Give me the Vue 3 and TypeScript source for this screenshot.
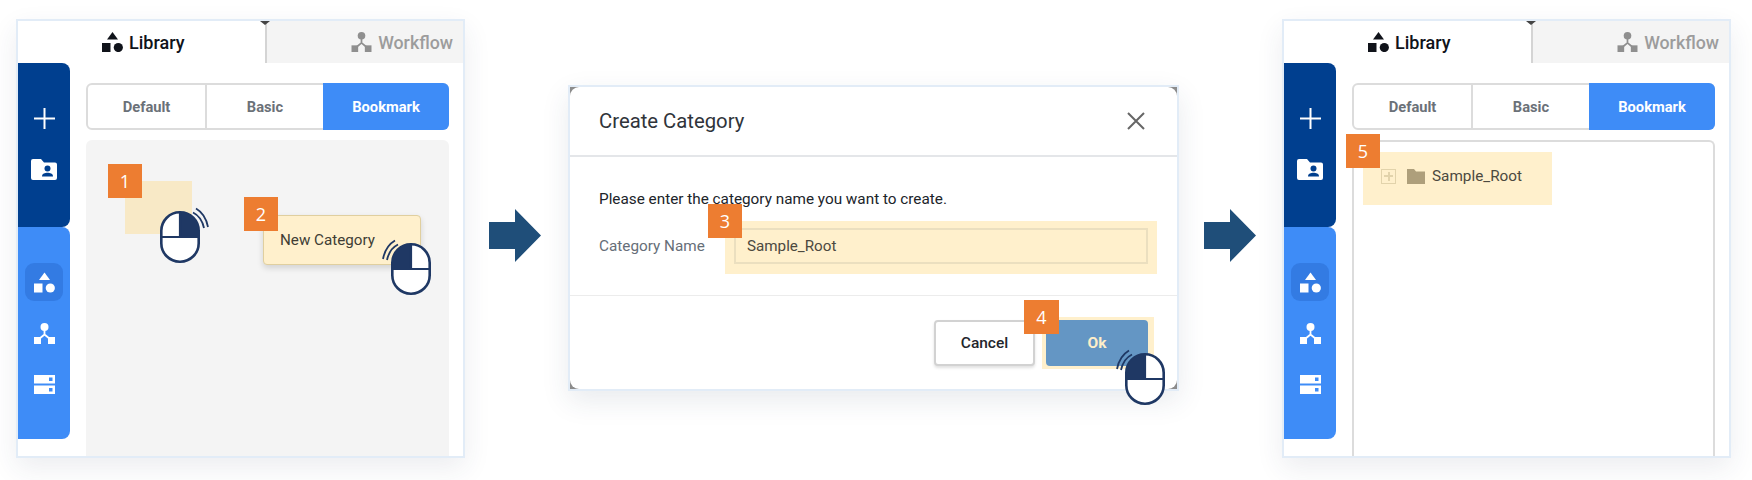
<script setup lang="ts">
const segments = ['Default', 'Basic', 'Bookmark']
</script>

<template>
  <div class="page">
    <svg class="defs" width="0" height="0">
      <symbol id="mouse" viewBox="0 0 50 56">
        <path class="wave" d="M36 1.5C42 5 46.500 12 48 20" />
        <path class="wave" d="M33 5.500C38 8 42.500 14 44 21" />
        <rect x="1.300" y="5.300" width="37.400" height="49.400" rx="18.500" fill="#fff" stroke="#1f3864" stroke-width="2.600" />
        <path d="M20 5.300A18.500 18.500 0 0 1 38.700 23.800V30H20Z" fill="#1f3864" />
        <path d="M1.300 30H38.700M20 5.300V30" stroke="#1f3864" stroke-width="2.200" fill="none" />
      </symbol>
      <symbol id="shapes" viewBox="0 0 21 20">
        <path d="M10.500 0L16 7.500H5Z" />
        <rect x="0" y="11" width="8.500" height="9" />
        <circle cx="16.300" cy="15.500" r="4.600" />
      </symbol>
      <symbol id="flow" viewBox="0 0 21 21">
        <circle cx="10.500" cy="4" r="4" />
        <rect x="0" y="14" width="7" height="7" />
        <rect x="14" y="14" width="7" height="7" />
        <path d="M10.500 7V11.500L5 16M10.500 11.500L16 16" fill="none" stroke="currentColor" stroke-width="1.800" />
      </symbol>
      <symbol id="folder-user" viewBox="0 0 26 21">
        <path d="M2 0H10L13 3.500H24A2 2 0 0 1 26 5.500V19A2 2 0 0 1 24 21H2A2 2 0 0 1 0 19V2A2 2 0 0 1 2 0Z" fill="#fff" />
        <circle cx="16.500" cy="9.500" r="3" fill="#003f8f" />
        <path d="M11 17.500C11 14.500 14 13.800 16.500 13.800S22 14.500 22 17.500Z" fill="#003f8f" />
      </symbol>
      <symbol id="servers" viewBox="0 0 21 19">
        <rect width="21" height="8.500" fill="#fff" />
        <rect y="10.500" width="21" height="8.500" fill="#fff" />
        <rect x="15" y="2.500" width="3.500" height="3.500" fill="#3e8cf7" />
        <rect x="15" y="13" width="3.500" height="3.500" fill="#3e8cf7" />
      </symbol>
    </svg>

    <!-- step 1, 2 -->
    <section class="panel">
      <div class="tabs">
        <div class="tab active"><svg class="tab-icon"><use href="#shapes" /></svg>Library</div>
        <div class="tab"><svg class="tab-icon"><use href="#flow" /></svg>Workflow</div>
        <span class="notch"></span>
      </div>
      <div class="panel-body">
        <aside class="sidebar">
          <div class="side-top">
            <svg class="plus" viewBox="0 0 21 21"><path d="M10.500 0V21M0 10.500H21" /></svg>
            <svg class="folder-user"><use href="#folder-user" /></svg>
          </div>
          <div class="side-bottom">
            <div class="side-item current"><svg class="side-icon"><use href="#shapes" /></svg></div>
            <div class="side-item"><svg class="side-icon"><use href="#flow" /></svg></div>
            <div class="side-item"><svg class="side-icon"><use href="#servers" /></svg></div>
          </div>
        </aside>
        <div class="main">
          <div class="seg">
            <div v-for="s in segments" :key="s" class="seg-item" :class="{ on: s === 'Bookmark' }">{{ s }}</div>
          </div>
          <div class="content grey"></div>
        </div>
      </div>
      <div class="drag-area"></div>
      <span class="badge b1">1</span>
      <div class="new-cat">New Category</div>
      <span class="badge b2">2</span>
      <svg class="mouse m1"><use href="#mouse" /></svg>
      <svg class="mouse m2 flip"><use href="#mouse" /></svg>
    </section>

    <svg class="arrow first" viewBox="0 0 52 53"><path d="M0 13H26V0L52 26.500L26 53V40H0Z" /></svg>

    <!-- step 3, 4 -->
    <section class="dialog">
      <div class="dialog-inner">
        <header class="dlg-head">
          <h2>Create Category</h2>
          <svg class="close" viewBox="0 0 18 18"><path d="M1 1L17 17M17 1L1 17" /></svg>
        </header>
        <div class="dlg-body">
          <p>Please enter the category name you want to create.</p>
          <div class="dlg-row">
            <label>Category Name</label>
            <div class="input-mark"><div class="input">Sample_Root</div></div>
          </div>
        </div>
        <footer class="dlg-foot">
          <button class="btn cancel">Cancel</button>
          <div class="ok-mark"><button class="btn ok">Ok</button></div>
        </footer>
      </div>
      <span class="badge b3">3</span>
      <span class="badge b4">4</span>
      <svg class="mouse m3 flip"><use href="#mouse" /></svg>
    </section>

    <svg class="arrow last" viewBox="0 0 52 53"><path d="M0 13H26V0L52 26.500L26 53V40H0Z" /></svg>

    <!-- step 5 -->
    <section class="panel">
      <div class="tabs">
        <div class="tab active"><svg class="tab-icon"><use href="#shapes" /></svg>Library</div>
        <div class="tab"><svg class="tab-icon"><use href="#flow" /></svg>Workflow</div>
        <span class="notch"></span>
      </div>
      <div class="panel-body">
        <aside class="sidebar">
          <div class="side-top">
            <svg class="plus" viewBox="0 0 21 21"><path d="M10.500 0V21M0 10.500H21" /></svg>
            <svg class="folder-user"><use href="#folder-user" /></svg>
          </div>
          <div class="side-bottom">
            <div class="side-item current"><svg class="side-icon"><use href="#shapes" /></svg></div>
            <div class="side-item"><svg class="side-icon"><use href="#flow" /></svg></div>
            <div class="side-item"><svg class="side-icon"><use href="#servers" /></svg></div>
          </div>
        </aside>
        <div class="main">
          <div class="seg">
            <div v-for="s in segments" :key="s" class="seg-item" :class="{ on: s === 'Bookmark' }">{{ s }}</div>
          </div>
          <div class="content tree">
            <div class="tree-row">
              <span class="expander"></span>
              <svg class="folder" viewBox="0 0 18 15"><path d="M0 0H7L9 2.500H18V15H0Z" /></svg>
              <span>Sample_Root</span>
            </div>
          </div>
        </div>
      </div>
      <span class="badge b5">5</span>
    </section>
  </div>
</template>

<style scoped>
.page {
  width: 1752px;
  height: 480px;
  box-sizing: border-box;
  padding: 19px 0 0 16px;
  display: flex;
  align-items: flex-start;
  overflow: hidden;
  background: #fff;
  font-family: Roboto, "Liberation Sans", sans-serif;
}
.defs {
  position: absolute;
}
.wave {
  fill: none;
  stroke: #1f3864;
  stroke-width: 1.800;
}

.panel {
  position: relative;
  flex: none;
  width: 449px;
  height: 439px;
  box-sizing: border-box;
  border: 2px solid #e2ecf7;
  display: flex;
  flex-direction: column;
  background: #fff;
  box-shadow: 0 10px 26px rgba(40, 60, 90, 0.09);
}
.tabs {
  position: relative;
  display: flex;
  height: 42px;
  flex: none;
}
.tab {
  display: flex;
  align-items: center;
  font-size: 18px;
  font-weight: 500;
}
.tab.active {
  width: 249px;
  box-sizing: border-box;
  padding-left: 84px;
  color: #10131a;
  border-right: 2px solid #d4d4d4;
}
.tab:not(.active) {
  flex: 1;
  justify-content: flex-end;
  padding-right: 10px;
  font-size: 17.800px;
  color: #9c9c9c;
  background: #f4f4f4;
}
.tab-icon {
  width: 21px;
  height: 20px;
  margin-right: 6px;
  fill: currentColor;
}
.tab:not(.active) .tab-icon {
  fill: #8f8f8f;
  color: #8f8f8f;
  margin-right: 6px;
}
.notch {
  position: absolute;
  left: 242px;
  top: 0;
  width: 0;
  height: 0;
  border: 5px solid transparent;
  border-top: 4px solid #444;
  border-bottom-width: 0;
}

.panel-body {
  flex: 1;
  display: flex;
  min-height: 0;
}
.sidebar {
  flex: none;
  width: 52px;
  margin-bottom: 17px;
  display: flex;
  flex-direction: column;
}
.side-top {
  height: 164px;
  box-sizing: border-box;
  padding-top: 45px;
  display: flex;
  flex-direction: column;
  align-items: center;
  gap: 30px;
  background: #003f8f;
  border-radius: 0 8px 8px 0;
}
.side-bottom {
  flex: 1;
  padding-top: 36px;
  display: flex;
  flex-direction: column;
  align-items: center;
  gap: 13px;
  background: #3e8cf7;
  border-radius: 0 8px 8px 0;
}
.plus {
  width: 21px;
  height: 21px;
  stroke: #fff;
  stroke-width: 2;
}
.folder-user {
  width: 26px;
  height: 21px;
}
.side-item {
  width: 38px;
  height: 38px;
  display: flex;
  align-items: center;
  justify-content: center;
  color: #fff;
  border-radius: 9px;
}
.side-item.current {
  background: #337be3;
}
.side-icon {
  width: 21px;
  height: 21px;
  fill: #fff;
}

.main {
  flex: 1;
  padding: 20px 14px 0 16px;
  display: flex;
  flex-direction: column;
  gap: 10px;
  min-width: 0;
}
.seg {
  display: flex;
  height: 47px;
  flex: none;
  box-sizing: border-box;
  border: 2px solid #dcdcdc;
  border-radius: 6px;
  overflow: visible;
}
.seg-item {
  flex: 1;
  display: flex;
  align-items: center;
  justify-content: center;
  font-size: 14.700px;
  font-weight: 700;
  color: #6b7178;
}
.seg-item:first-child {
  flex: none;
  width: 119px;
  box-sizing: border-box;
  border-right: 2px solid #dcdcdc;
}
.seg-item.on {
  flex: none;
  width: 126px;
  margin: -2px -2px -2px 0;
  color: #fff;
  background: #3e8cf7;
  border-radius: 0 6px 6px 0;
}
.content {
  flex: 1;
  border-radius: 6px 6px 0 0;
  box-sizing: border-box;
}
.content.grey {
  background: #f4f4f4;
}
.content.tree {
  border: 2px solid #dcdcdc;
  border-bottom: 0;
  padding: 10px 0 0 9px;
}
.tree-row {
  width: 189px;
  height: 53px;
  box-sizing: border-box;
  padding-left: 18px;
  padding-bottom: 5px;
  display: flex;
  align-items: center;
  background: #fff0cc;
  font-size: 15.300px;
  color: #4c493f;
}
.expander {
  position: relative;
  width: 15px;
  height: 15px;
  box-sizing: border-box;
  margin-right: 11px;
  border: 1px solid #e2d3ab;
  background:
    linear-gradient(#e2d3ab, #e2d3ab) center / 9px 2px no-repeat,
    linear-gradient(#e2d3ab, #e2d3ab) center / 2px 9px no-repeat;
}
.folder {
  width: 18px;
  height: 15px;
  margin-right: 7px;
  fill: #ae9f7b;
}

.drag-area {
  position: absolute;
  left: 107px;
  top: 160px;
  width: 67px;
  height: 53px;
  background: #f8e9c6;
}
.new-cat {
  position: absolute;
  left: 245px;
  top: 194px;
  width: 158px;
  height: 50px;
  box-sizing: border-box;
  padding: 0 0 0 16px;
  display: flex;
  align-items: center;
  font-size: 15.200px;
  color: #403d35;
  background: #fff0cc;
  border: 1px solid #e0cf9f;
  border-radius: 4px;
  box-shadow: 0 3px 6px rgba(0, 0, 0, 0.14);
}
.badge {
  position: absolute;
  width: 34px;
  height: 34px;
  display: flex;
  align-items: center;
  justify-content: center;
  background: #ed7d31;
  color: #fff;
  font-family: "Open Sans", sans-serif;
  font-size: 18px;
}
.b1 { left: 90px; top: 143px; }
.b2 { left: 226px; top: 176px; }
.b3 { left: 138px; top: 117px; }
.b4 { left: 454px; top: 213px; width: 35px; }
.b5 { left: 62px; top: 113px; }

.mouse {
  position: absolute;
  width: 50px;
  height: 56px;
}
.flip {
  transform: scaleX(-1);
}
.m1 { left: 142px; top: 186px; }
.m2 { left: 363px; top: 218px; }
.m3 { left: 545px; top: 262px; }

.arrow {
  flex: none;
  width: 52px;
  height: 53px;
  margin: 190px 25px 0;
  fill: #1f4e79;
}
.arrow.first {
  margin-left: 24px;
  margin-right: 27px;
}
.arrow.last {
  margin-right: 26px;
}

.dialog {
  position: relative;
  flex: none;
  width: 611px;
  height: 306px;
  margin-top: 66px;
  box-sizing: border-box;
  border: 2px solid #e2ecf7;
  background: #8c8c8c;
  box-shadow: 0 10px 26px rgba(40, 60, 90, 0.1);
}
.dialog-inner {
  height: 100%;
  background: #fff;
  border-radius: 9px;
  display: flex;
  flex-direction: column;
}
.dlg-head {
  flex: none;
  height: 70px;
  box-sizing: border-box;
  padding: 0 32px 0 29px;
  display: flex;
  align-items: center;
  justify-content: space-between;
  border-bottom: 2px solid #e4e6e9;
}
.dlg-head h2 {
  margin: 0;
  font-size: 20.300px;
  font-weight: 400;
  color: #30343a;
}
.close {
  width: 18px;
  height: 18px;
  stroke: #666;
  stroke-width: 2;
  fill: none;
}
.dlg-body {
  flex: none;
  height: 139px;
  box-sizing: border-box;
  padding: 32px 20px 0 29px;
  border-bottom: 1px solid #ececec;
}
.dlg-body p {
  margin: 0 0 12px;
  font-size: 15.300px;
  line-height: 20px;
  color: #20242a;
}
.dlg-row {
  display: flex;
  align-items: flex-start;
}
.dlg-row label {
  width: 126px;
  flex: none;
  line-height: 50px;
  font-size: 15.300px;
  color: #666e78;
}
.input-mark {
  flex: 1;
  height: 53px;
  box-sizing: border-box;
  padding: 7px 9px 10px;
  background: #fff0cc;
}
.input {
  height: 36px;
  box-sizing: border-box;
  padding-left: 11px;
  display: flex;
  align-items: center;
  border: 2px solid #ebdfbf;
  font-size: 15.200px;
  color: #4c493f;
}
.dlg-foot {
  flex: 1;
  padding: 21px 23px 0 0;
  display: flex;
  justify-content: flex-end;
  align-items: flex-start;
  gap: 7px;
}
.btn {
  display: block;
  height: 46px;
  padding: 0;
  border-radius: 4px;
  font-family: inherit;
  font-size: 15.500px;
  font-weight: 500;
}
.cancel {
  width: 101px;
  margin-top: 3px;
  background: #fff;
  border: 2px solid #d2d2d2;
  color: #23262c;
  box-shadow: 0 2px 3px rgba(0, 0, 0, 0.12);
}
.ok-mark {
  padding: 3px 6px 3px 4px;
  background: #fff0cc;
}
.ok {
  width: 102px;
  border: 0;
  background: #6496c4;
  color: #fdeec9;
  font-weight: 700;
}
</style>

<style>
html,
body {
  margin: 0;
  background: #fff;
}
</style>
